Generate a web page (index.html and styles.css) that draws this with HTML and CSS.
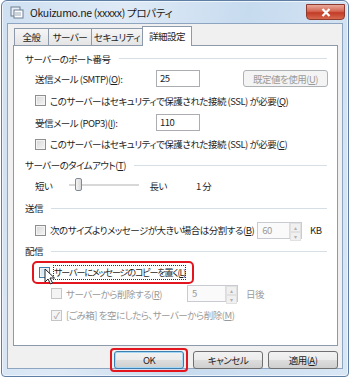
FILE: index.html
```html
<!DOCTYPE html>
<html lang="ja">
<head>
  <meta charset="UTF-8" />
  <title>Okuizumo.ne (xxxxx) プロパティ</title>
  <link rel="stylesheet" href="styles.css">
</head>
<body>
  <div class="window">
    <div class="titlebar">
      <svg class="app-icon" width="14" height="14" viewBox="0 0 14 14">
        <rect x="1" y="2" width="9" height="9" fill="#e8eef5" stroke="#6d7f92"/>
        <rect x="4" y="5" width="9" height="8" fill="#ffffff" stroke="#6d7f92"/>
        <path d="M5 8h6M5 10h6" stroke="#9aa8b6"/>
      </svg>
      <span class="title">Okuizumo.ne (xxxxx) プロパティ</span>
      <div class="close">
        <svg width="10" height="9" viewBox="0 0 10 9"><path d="M1.5 1l7 7M8.5 1l-7 7" stroke="#fff" stroke-width="2.2"/></svg>
      </div>
    </div>

    <div class="client">
      <div class="tabs">
        <div class="tab tab-general">全般</div>
        <div class="tab tab-server">サーバー</div>
        <div class="tab tab-security">セキュリティ</div>
        <div class="tab active">詳細設定</div>
      </div>

      <div class="panel">
        <div class="group-head h19"><span>サーバーのポート番号</span></div>
        <div class="row port-row h21">
          <span class="label">送信メール (SMTP)(<u>O</u>):</span>
          <div class="field">25</div>
          <div class="btn disabled">既定値を使用(<u>U</u>)</div>
        </div>
        <div class="row check-row h23">
          <span class="box"></span>
          <span>このサーバーはセキュリティで保護された接続 (SSL) が必要(<u>Q</u>)</span>
        </div>
        <div class="row port-row h21">
          <span class="label">受信メール (POP3)(<u>I</u>):</span>
          <div class="field">110</div>
        </div>
        <div class="row check-row h22">
          <span class="box"></span>
          <span>このサーバーはセキュリティで保護された接続 (SSL) が必要(<u>C</u>)</span>
        </div>

        <div class="group-head h20"><span>サーバーのタイムアウト(<u>T</u>)</span></div>
        <div class="row slider-row h21">
          <span>短い</span>
          <div class="slider"><span class="thumb"></span></div>
          <span>長い</span>
          <span class="minutes">1 分</span>
        </div>

        <div class="group-head h24"><span>送信</span></div>
        <div class="row check-row h20">
          <span class="box"></span>
          <span>次のサイズよりメッセージが大きい場合は分割する(<u>B</u>)</span>
          <div class="spin spin-kb"><span class="val">60</span><span class="arrows"><i>▴</i><i>▾</i></span></div>
          <span class="unit">KB</span>
        </div>

        <div class="group-head h22"><span>配信</span></div>
        <div class="row check-row highlight">
          <span class="box focus"></span>
          <span class="focus-label">サーバーにメッセージのコピーを置く(<u>L</u>)</span>
          <svg class="cursor" width="11" height="17" viewBox="0 0 11 17">
            <path d="M1 1v13l3-3 2.5 5 2-1-2.5-5h4.5z" fill="#fff" stroke="#222" stroke-width="1"/>
          </svg>
        </div>
        <div class="row check-row sub disabled-text h21">
          <span class="box dim"></span>
          <span class="del-label">サーバーから削除する(<u>R</u>)</span>
          <div class="spin spin-days"><span class="val">5</span><span class="arrows"><i>▴</i><i>▾</i></span></div>
          <span class="unit">日後</span>
        </div>
        <div class="row check-row sub disabled-text h22">
          <span class="box dim checked">✓</span>
          <span>[ごみ箱] を空にしたら、サーバーから削除(<u>M</u>)</span>
        </div>
      </div>

      <div class="buttons">
        <div class="ok-mark"><div class="btn dialog default">OK</div></div>
        <div class="btn dialog">キャンセル</div>
        <div class="btn dialog">適用(<u>A</u>)</div>
      </div>
    </div>
  </div>
</body>
</html>
```

FILE: styles.css
```css
body {
  margin: 0;
  background: #ffffff;
  font-family: "Noto Sans CJK JP", "Noto Sans", sans-serif;
  font-size: 9.5px;
  font-feature-settings: "palt";
  letter-spacing: -0.5px;
  white-space: nowrap;
  color: #1e1e1e;
}

u {
  text-decoration: underline;
  text-underline-offset: 1px;
}

.h19 { height: 19px; }
.h20 { height: 20px; }
.h21 { height: 21px; }
.h22 { height: 22px; }
.h23 { height: 23px; }
.h24 { height: 24px; }

.window {
  width: 336px;
  height: 370px;
  margin: 0 1px 0 1px;
  padding: 0 5px 5px 5px;
  border: 1px solid #5f7ea3;
  border-radius: 6px 6px 4px 4px;
  background: linear-gradient(100deg, #cfe0f2 0%, #dfeaf6 30%, #c7dbef 60%, #d9e7f5 100%);
  box-shadow: inset 0 0 0 1px #eef4fb;
}

.titlebar {
  height: 22px;
  display: flex;
  align-items: center;
  gap: 6px;
  padding-left: 3px;
}

.app-icon {
  flex: none;
}

.title {
  font-size: 10.5px;
  letter-spacing: -0.3px;
  color: #1a1a1a;
  flex: 1;
  margin-top: 1px;
}

.close {
  align-self: flex-start;
  width: 37px;
  height: 14px;
  margin-top: 3px;
  margin-right: -2px;
  border: 1px solid #8e3a2e;
  border-radius: 0 0 4px 4px;
  background: linear-gradient(#e9a99b 0%, #d56652 45%, #c23b26 55%, #d7684f 100%);
  display: flex;
  align-items: center;
  justify-content: center;
}

.client {
  height: 346px;
  background: #f0f0f0;
  border: 1px solid #8ea5c2;
  padding: 2px 4px 0 5px;
  box-sizing: border-box;
}

.tabs {
  display: flex;
  align-items: flex-end;
  height: 19px;
  padding-left: 1px;
  position: relative;
  z-index: 1;
}

.tab {
  height: 16px;
  line-height: 16px;
  text-align: center;
  border: 1px solid #8d9aab;
  border-bottom: none;
  margin-right: -1px;
  background: linear-gradient(#f6f6f6, #e4e4e4);
}

.tab-general { width: 33px; }
.tab-server { width: 42px; }
.tab-security { width: 50px; }

.tab.active {
  width: 48px;
  height: 19px;
  background: #ffffff;
  margin-bottom: -1px;
  line-height: 18px;
}

.panel {
  height: 301px;
  background: #ffffff;
  border: 1px solid #8d9aab;
  box-sizing: border-box;
  padding: 3px 9px 0 11px;
}

.group-head {
  display: flex;
  align-items: center;
  gap: 8px;
}

.group-head::after {
  content: "";
  flex: 1;
  height: 1px;
  background: #d5dfe5;
  margin-right: 1px;
}

.row {
  display: flex;
  align-items: center;
  padding-left: 10px;
}

.port-row .label {
  width: 121px;
}

.field {
  width: 39px;
  height: 15px;
  border: 1px solid #abadb3;
  padding-left: 3px;
  line-height: 15px;
}

.btn {
  height: 15px;
  border: 1px solid #707070;
  border-radius: 3px;
  background: linear-gradient(#f2f2f2 0%, #ebebeb 50%, #dddddd 51%, #cfcfcf 100%);
  display: flex;
  align-items: center;
  justify-content: center;
}

.btn.disabled {
  margin-left: 43px;
  width: 83px;
  border-color: #adb2b5;
  background: #f4f4f4;
  color: #9a9a9a;
}

.check-row {
  gap: 3px;
  padding-right: 2px;
}

.box {
  width: 9px;
  height: 9px;
  border: 1px solid #8e8f8f;
  background: linear-gradient(135deg, #d7d7d7, #f6f6f6);
  flex: none;
  margin-right: 1px;
  box-shadow: inset 0 0 0 1px #f4f4f4;
}

.slider-row {
  gap: 0;
}

.slider {
  width: 70px;
  height: 2px;
  margin: 0 10px 0 17px;
  background: #d8d8d8;
  border-bottom: 1px solid #fff;
  position: relative;
}

.thumb {
  position: absolute;
  left: 6px;
  top: -6px;
  width: 5px;
  height: 11px;
  border: 1px solid #7f8a97;
  border-radius: 2px;
  background: linear-gradient(90deg, #f4f4f4, #d8d8d8);
}

.minutes {
  margin-left: 29px;
}

.spin {
  height: 15px;
  border: 1px solid #c8ccd2;
  display: flex;
  color: #9b9b9b;
  background: #fafafa;
}

.spin .val {
  flex: 1;
  padding-left: 4px;
  line-height: 15px;
}

.spin .arrows {
  width: 11px;
  display: flex;
  flex-direction: column;
  border-left: 1px solid #dcdcdc;
}

.spin .arrows i {
  flex: 1;
  font-style: normal;
  font-size: 6px;
  line-height: 7px;
  text-align: center;
  color: #b0b0b0;
  background: #f0f0f0;
  border: 1px solid #e1e1e1;
}

.spin-kb {
  width: 43px;
  margin-left: auto;
}

.del-label {
  width: 118px;
}

.spin-days {
  width: 49px;
}

.unit {
  margin-left: 5px;
  width: 16px;
}

.highlight {
  box-sizing: border-box;
  margin-left: 7px;
  padding-left: 5px;
  width: 162px;
  height: 23px;
  margin-top: -1px;
  margin-bottom: -1px;
  border: 2px solid #e3161f;
  border-radius: 5px;
  position: relative;
}

.box.focus {
  border-color: #3c7fb1;
  background: linear-gradient(135deg, #c9e5f8, #e9f5fd);
}

.focus-label {
  outline: 1px dotted #333;
  line-height: 13px;
  font-size: 9px;
  letter-spacing: -1.1px;
}

.cursor {
  position: absolute;
  left: 10px;
  top: 5px;
}

.sub {
  padding-left: 26px;
}

.disabled-text {
  color: #9a9a9a;
}

.box.dim {
  border-color: #c5c5c5;
  background: #f4f4f4;
}

.box.checked {
  font-size: 9px;
  line-height: 9px;
  text-align: center;
  color: #a0a0a0;
}

.buttons {
  display: flex;
  justify-content: flex-end;
  gap: 5px;
  padding-top: 5px;
  padding-right: 0;
}

.btn.dialog {
  width: 68px;
  height: 16px;
  border-color: #707070;
}

.btn.default {
  border-color: #3c7fb1;
  box-shadow: inset 0 0 0 1px #a6d8f5;
}

.ok-mark {
  border: 2px solid #e3161f;
  border-radius: 4px;
  padding: 1px 2px;
  margin-top: -3px;
}
```
